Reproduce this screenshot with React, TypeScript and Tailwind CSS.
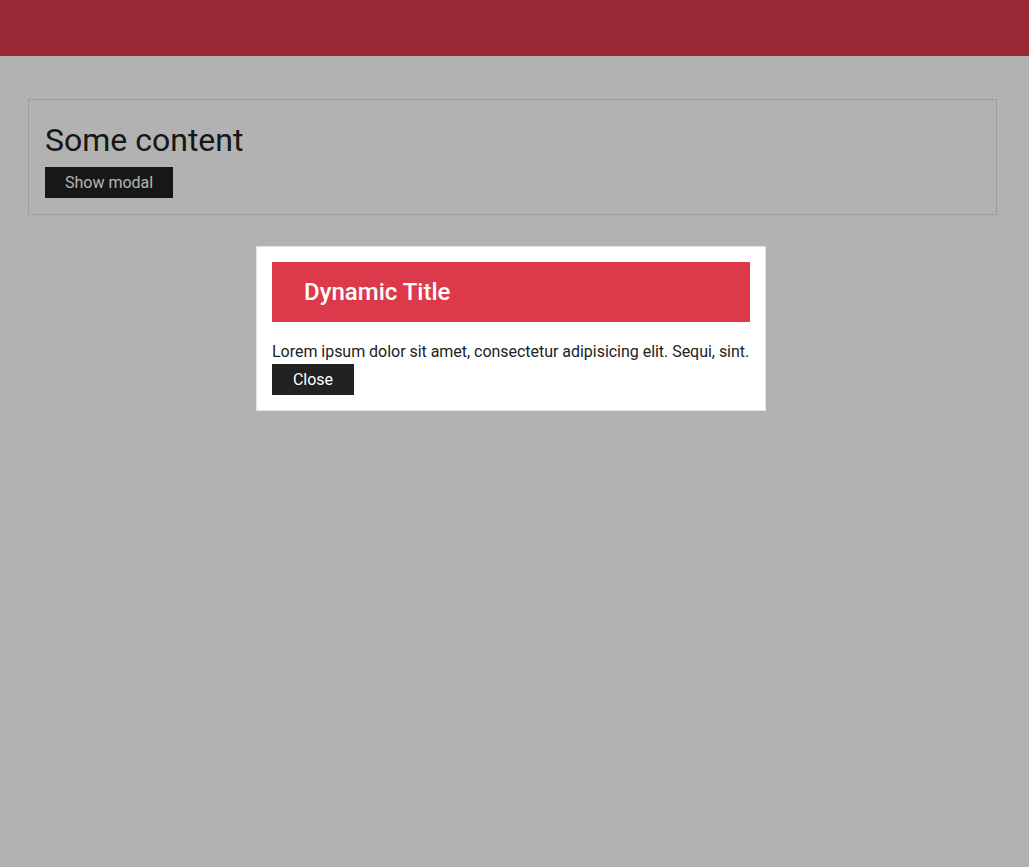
import React from 'react';

const font = { fontFamily: 'Roboto, "Noto Sans", Arial, sans-serif' };

export default function App() {
  return (
    <div className="relative min-h-[867px] bg-white text-[#222]" style={font}>
      <header className="h-[56px] bg-[#dd3a4c]" />

      <main className="pt-[43px] pl-[28px]">
        <section className="w-[969px] border border-dotted border-[#c4c4c4] p-[16px]">
          <h1 className="text-[32px] leading-[48px] text-[#222]">Some content</h1>
          <button className="mt-[3px] h-[31px] bg-[#222] px-[20px] text-[16px] text-white">
            Show modal
          </button>
        </section>
      </main>

      <div className="fixed inset-0 bg-black/30" />

      <div className="fixed left-[256px] top-[246px] w-[510px] border border-[#e2e2e2] bg-white p-[15px]">
        <div className="flex h-[60px] items-center bg-[#dc3a4a] px-[32px]">
          <h2 className="text-[24px] font-medium text-white">Dynamic Title</h2>
        </div>
        <p className="mt-[18px] whitespace-nowrap text-[16px] leading-[24px] tracking-[-0.03px] text-[#222]">
          Lorem ipsum dolor sit amet, consectetur adipisicing elit. Sequi, sint.
        </p>
        <button className="h-[31px] w-[82px] bg-[#222] text-[16px] text-white">Close</button>
      </div>
    </div>
  );
}
